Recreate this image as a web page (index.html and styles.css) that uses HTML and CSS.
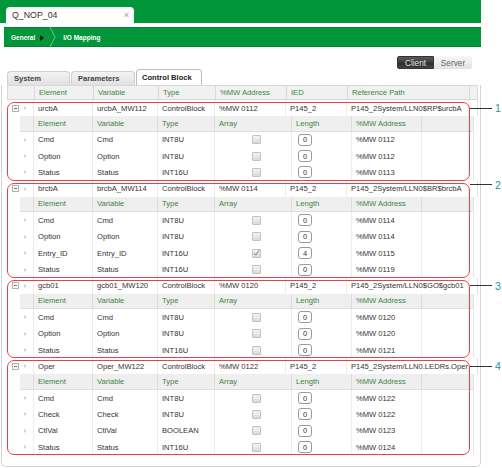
FILE: index.html
```html
<!DOCTYPE html>
<html lang="en">
<head>
    <meta charset="UTF-8">
    <title>Q_NOP_04 - I/O Mapping</title>
    <link rel="stylesheet" href="styles.css">
</head>
<body>
<div class="page">
    <div class="topbar">
        <div class="doc-tab"><span>Q_NOP_04</span><span class="close">&times;</span></div>
    </div>

    <div class="crumbs">
        <span>General</span>
        <span class="crumb-arrow"></span>
        <svg class="crumb-sep" width="8" height="20" viewBox="0 0 8 20"><path d="M1 0 L6 10 L1 20" fill="none" stroke="rgba(255,255,255,0.55)" stroke-width="0.8"/></svg>
        <span>I/O Mapping</span>
    </div>

    <div class="toolbar">
        <div class="toggle"><span class="on">Client</span><span>Server</span></div>
    </div>

    <div class="tabs">
        <div class="tab">System</div>
        <div class="tab">Parameters</div>
        <div class="tab active">Control Block</div>
    </div>

    <div class="panel">
        <div class="grid">
            <div class="row head">
                <div class="cell"></div>
                <div class="cell">Element</div>
                <div class="cell">Variable</div>
                <div class="cell">Type</div>
                <div class="cell">%MW Address</div>
                <div class="cell">IED</div>
                <div class="cell">Reference Path</div>
                <div class="cell"></div>
            </div>

            <!-- urcbA -->
            <div class="group">
                <div class="row main">
                    <div class="cell"><span class="minus"></span><span class="tri"></span></div>
                    <div class="cell">urcbA</div>
                    <div class="cell">urcbA_MW112</div>
                    <div class="cell">ControlBlock</div>
                    <div class="cell">%MW 0112</div>
                    <div class="cell">P145_2</div>
                    <div class="cell">P145_2System/LLN0$RP$urcbA</div>
                    <div class="cell"></div>
                </div>
                <div class="sub">
                    <div class="row subhead">
                        <div class="cell"></div><div class="cell">Element</div><div class="cell">Variable</div><div class="cell">Type</div>
                        <div class="cell">Array</div><div class="cell">Length</div><div class="cell">%MW Address</div><div class="cell"></div>
                    </div>
                    <div class="row item">
                        <div class="cell"><span class="tri"></span></div><div class="cell">Cmd</div><div class="cell">Cmd</div><div class="cell">INT8U</div>
                        <div class="cell"><span class="check"></span></div><div class="cell"><span class="len">0</span></div><div class="cell">%MW 0112</div><div class="cell"></div>
                    </div>
                    <div class="row item">
                        <div class="cell"><span class="tri"></span></div><div class="cell">Option</div><div class="cell">Option</div><div class="cell">INT8U</div>
                        <div class="cell"><span class="check"></span></div><div class="cell"><span class="len">0</span></div><div class="cell">%MW 0112</div><div class="cell"></div>
                    </div>
                    <div class="row item">
                        <div class="cell"><span class="tri"></span></div><div class="cell">Status</div><div class="cell">Status</div><div class="cell">INT16U</div>
                        <div class="cell"><span class="check"></span></div><div class="cell"><span class="len">0</span></div><div class="cell">%MW 0113</div><div class="cell"></div>
                    </div>
                </div>
                <div class="callout"><span>1</span></div>
            </div>

            <!-- brcbA -->
            <div class="group">
                <div class="row main">
                    <div class="cell"><span class="minus"></span><span class="tri"></span></div>
                    <div class="cell">brcbA</div>
                    <div class="cell">brcbA_MW114</div>
                    <div class="cell">ControlBlock</div>
                    <div class="cell">%MW 0114</div>
                    <div class="cell">P145_2</div>
                    <div class="cell">P145_2System/LLN0$BR$brcbA</div>
                    <div class="cell"></div>
                </div>
                <div class="sub">
                    <div class="row subhead">
                        <div class="cell"></div><div class="cell">Element</div><div class="cell">Variable</div><div class="cell">Type</div>
                        <div class="cell">Array</div><div class="cell">Length</div><div class="cell">%MW Address</div><div class="cell"></div>
                    </div>
                    <div class="row item">
                        <div class="cell"><span class="tri"></span></div><div class="cell">Cmd</div><div class="cell">Cmd</div><div class="cell">INT8U</div>
                        <div class="cell"><span class="check"></span></div><div class="cell"><span class="len">0</span></div><div class="cell">%MW 0114</div><div class="cell"></div>
                    </div>
                    <div class="row item">
                        <div class="cell"><span class="tri"></span></div><div class="cell">Option</div><div class="cell">Option</div><div class="cell">INT8U</div>
                        <div class="cell"><span class="check"></span></div><div class="cell"><span class="len">0</span></div><div class="cell">%MW 0114</div><div class="cell"></div>
                    </div>
                    <div class="row item">
                        <div class="cell"><span class="tri"></span></div><div class="cell">Entry_ID</div><div class="cell">Entry_ID</div><div class="cell">INT16U</div>
                        <div class="cell"><span class="check"><svg width="8" height="8" viewBox="0 0 8 8"><path d="M1.2 4.2 L3.2 6.4 L7 0.8" fill="none" stroke="#4f6f8f" stroke-width="1"/></svg></span></div><div class="cell"><span class="len">4</span></div><div class="cell">%MW 0115</div><div class="cell"></div>
                    </div>
                    <div class="row item">
                        <div class="cell"><span class="tri"></span></div><div class="cell">Status</div><div class="cell">Status</div><div class="cell">INT16U</div>
                        <div class="cell"><span class="check"></span></div><div class="cell"><span class="len">0</span></div><div class="cell">%MW 0119</div><div class="cell"></div>
                    </div>
                </div>
                <div class="callout high"><span>2</span></div>
            </div>

            <!-- gcb01 -->
            <div class="group">
                <div class="row main">
                    <div class="cell"><span class="minus"></span><span class="tri"></span></div>
                    <div class="cell">gcb01</div>
                    <div class="cell">gcb01_MW120</div>
                    <div class="cell">ControlBlock</div>
                    <div class="cell">%MW 0120</div>
                    <div class="cell">P145_2</div>
                    <div class="cell">P145_2System/LLN0$GO$gcb01</div>
                    <div class="cell"></div>
                </div>
                <div class="sub">
                    <div class="row subhead">
                        <div class="cell"></div><div class="cell">Element</div><div class="cell">Variable</div><div class="cell">Type</div>
                        <div class="cell">Array</div><div class="cell">Length</div><div class="cell">%MW Address</div><div class="cell"></div>
                    </div>
                    <div class="row item">
                        <div class="cell"><span class="tri"></span></div><div class="cell">Cmd</div><div class="cell">Cmd</div><div class="cell">INT8U</div>
                        <div class="cell"><span class="check"></span></div><div class="cell"><span class="len">0</span></div><div class="cell">%MW 0120</div><div class="cell"></div>
                    </div>
                    <div class="row item">
                        <div class="cell"><span class="tri"></span></div><div class="cell">Option</div><div class="cell">Option</div><div class="cell">INT8U</div>
                        <div class="cell"><span class="check"></span></div><div class="cell"><span class="len">0</span></div><div class="cell">%MW 0120</div><div class="cell"></div>
                    </div>
                    <div class="row item">
                        <div class="cell"><span class="tri"></span></div><div class="cell">Status</div><div class="cell">Status</div><div class="cell">INT16U</div>
                        <div class="cell"><span class="check"></span></div><div class="cell"><span class="len">0</span></div><div class="cell">%MW 0121</div><div class="cell"></div>
                    </div>
                </div>
                <div class="callout"><span>3</span></div>
            </div>

            <!-- Oper -->
            <div class="group">
                <div class="row main">
                    <div class="cell"><span class="minus"></span><span class="tri"></span></div>
                    <div class="cell">Oper</div>
                    <div class="cell">Oper_MW122</div>
                    <div class="cell">ControlBlock</div>
                    <div class="cell">%MW 0122</div>
                    <div class="cell">P145_2</div>
                    <div class="cell">P145_2System/LLN0.LEDRs.Oper</div>
                    <div class="cell"></div>
                </div>
                <div class="sub">
                    <div class="row subhead">
                        <div class="cell"></div><div class="cell">Element</div><div class="cell">Variable</div><div class="cell">Type</div>
                        <div class="cell">Array</div><div class="cell">Length</div><div class="cell">%MW Address</div><div class="cell"></div>
                    </div>
                    <div class="row item">
                        <div class="cell"><span class="tri"></span></div><div class="cell">Cmd</div><div class="cell">Cmd</div><div class="cell">INT8U</div>
                        <div class="cell"><span class="check"></span></div><div class="cell"><span class="len">0</span></div><div class="cell">%MW 0122</div><div class="cell"></div>
                    </div>
                    <div class="row item">
                        <div class="cell"><span class="tri"></span></div><div class="cell">Check</div><div class="cell">Check</div><div class="cell">INT8U</div>
                        <div class="cell"><span class="check"></span></div><div class="cell"><span class="len">0</span></div><div class="cell">%MW 0122</div><div class="cell"></div>
                    </div>
                    <div class="row item">
                        <div class="cell"><span class="tri"></span></div><div class="cell">CtlVal</div><div class="cell">CtlVal</div><div class="cell">BOOLEAN</div>
                        <div class="cell"><span class="check"></span></div><div class="cell"><span class="len">0</span></div><div class="cell">%MW 0123</div><div class="cell"></div>
                    </div>
                    <div class="row item">
                        <div class="cell"><span class="tri"></span></div><div class="cell">Status</div><div class="cell">Status</div><div class="cell">INT16U</div>
                        <div class="cell"><span class="check"></span></div><div class="cell"><span class="len">0</span></div><div class="cell">%MW 0124</div><div class="cell"></div>
                    </div>
                </div>
                <div class="callout"><span>4</span></div>
            </div>
        </div>
    </div>
</div>
</body>
</html>
```

FILE: styles.css
```css
/* Page basics */
* {
    margin: 0;
    padding: 0;
    box-sizing: border-box;
}

body {
    font-family: "Liberation Sans", Arial, sans-serif;
    background: #fff;
    color: #333;
}

.page {
    width: 481px;
}

/* Green document bar with the open tab */
.topbar {
    height: 23px;
    background: #009639;
    padding: 7px 0 0 6px;
}

.doc-tab {
    width: 128px;
    height: 16px;
    background: #fff;
    border-radius: 4px 4px 0 0;
    display: flex;
    align-items: center;
    justify-content: space-between;
    padding: 0 5px 0 6px;
    font-size: 8.8px;
    color: #333;
}

.doc-tab .close {
    color: #999;
    font-size: 9px;
}

/* Breadcrumb */
.crumbs {
    margin: 4px 0 0 4px;
    height: 20px;
    background: #009639;
    border-top: 1px solid #0c7d34;
    border-bottom: 1px solid #0c7d34;
    display: flex;
    align-items: center;
    padding-left: 7px;
    color: #fff;
    font-size: 6.5px;
    font-weight: bold;
}

.crumb-arrow {
    width: 0;
    height: 0;
    border-left: 4px solid #111;
    border-top: 3px solid transparent;
    border-bottom: 3px solid transparent;
    margin: 1px 0 0 5px;
}

.crumb-sep {
    margin: 0 6px 0 5px;
}

/* Client / Server switch */
.toolbar {
    display: flex;
    justify-content: flex-end;
    margin-top: 9px;
    padding-right: 9px;
    height: 13px;
}

.toggle {
    display: flex;
    font-size: 8.3px;
}

.toggle span {
    width: 38px;
    height: 13px;
    display: flex;
    align-items: center;
    justify-content: center;
    color: #666;
    background: linear-gradient(#f8f8f8, #e2e2e2);
    border-radius: 0 2px 2px 0;
}

.toggle .on {
    width: 37px;
    color: #e6e6e6;
    background: linear-gradient(#5a5a5a, #3e3e3e 48%, #2c2c2c 52%, #454545);
    border: 1px solid #333;
    border-radius: 2px 0 0 2px;
    text-shadow: 0 1px 0 #222;
}

/* Page tabs */
.tabs {
    display: flex;
    align-items: flex-end;
    height: 16px;
    padding-left: 7px;
    gap: 1px;
}

.tab {
    height: 14px;
    width: 63px;
    padding-left: 6px;
    display: flex;
    align-items: center;
    background: linear-gradient(#f3f3f3, #e1e1e1);
    border: 1px solid #cfcfcf;
    border-bottom: none;
    border-radius: 4px 4px 0 0;
    font-size: 7.6px;
    font-weight: bold;
    color: #444;
}

.tab:nth-child(2) {
    width: 64px;
}

.tab.active {
    height: 16px;
    width: 66px;
    padding-left: 5px;
    background: #fff;
    border-color: #bdbdbd;
    color: #222;
}

/* Tab content */
.panel {
    margin-left: 1px;
    width: 480px;
    height: 382px;
    border: 1px solid #d4d4d4;
    border-top: none;
    border-radius: 0 0 5px 5px;
    padding-left: 5px;
}

.grid {
    width: 471px;
    font-size: 7.6px;
}

.row {
    display: grid;
    grid-template-columns: 26px 59px 65px 57px 71px 61px 122px 10px;
}

.cell {
    display: flex;
    align-items: center;
    padding-left: 4px;
    white-space: nowrap;
    overflow: hidden;
    border-left: 1px solid #ededed;
}

.cell:first-child {
    border-left: none;
    padding-left: 0;
}

.head {
    height: 15px;
    background: #f1f1f1;
    border: 1px solid #d8d8d8;
    color: #3d823d;
}

.head .cell {
    border-left-color: #d8d8d8;
}

.main {
    height: 16px;
    border-right: 1px solid #e4e4e4;
}

/* Nested table of each control block */
.sub {
    margin: 0 4px 0 13px;
    border-right: 1px solid #e6e6e6;
}

.sub .row {
    grid-template-columns: 13px 59px 65px 57px 77px 60px 70px 53px;
}

.subhead {
    height: 15.5px;
    background: #efefef;
    border-bottom: 1px solid #dedede;
    color: #3d823d;
}

.subhead .cell {
    border-left-color: #dcdcdc;
}

.item {
    height: 16.4px;
}

.minus {
    width: 7px;
    height: 7px;
    border: 1px solid #b4b4b4;
    background: #f6f6f6;
    margin-left: 5px;
    position: relative;
}

.minus::after {
    content: "";
    position: absolute;
    left: 1px;
    right: 1px;
    top: 2px;
    height: 1px;
    background: #777;
}

.tri {
    width: 0;
    height: 0;
    border-left: 3px solid #d6d6d6;
    border-top: 2.5px solid transparent;
    border-bottom: 2.5px solid transparent;
    margin-left: 5px;
}

.item .tri {
    margin-left: 4px;
}

.check {
    width: 9px;
    height: 9px;
    margin-left: 33px;
    border: 1px solid #c2c2c2;
    border-radius: 1px;
    background: linear-gradient(#f4f4f4, #dadada);
    display: flex;
    align-items: center;
    justify-content: center;
}

.len {
    width: 14px;
    height: 12px;
    margin-left: 2px;
    border: 1px solid #9a9a9a;
    border-radius: 3px;
    background: #fff;
    display: flex;
    align-items: center;
    justify-content: center;
    font-size: 7.4px;
}

/* Red marks and numbered callouts over the table */
.group {
    position: relative;
}

.group::after {
    content: "";
    position: absolute;
    top: 2px;
    bottom: 0;
    left: -0.5px;
    right: 8px;
    border: 1.5px solid #e8414d;
    border-radius: 7px;
}

.callout {
    position: absolute;
    left: 463px;
    top: 2px;
    height: 12px;
    display: flex;
    align-items: center;
}

.callout.high {
    top: -2px;
}

.callout::before {
    content: "";
    width: 22px;
    height: 1px;
    background: #333;
}

.callout span {
    margin-left: 3px;
    color: #23979b;
    font-size: 10.5px;
}
```
